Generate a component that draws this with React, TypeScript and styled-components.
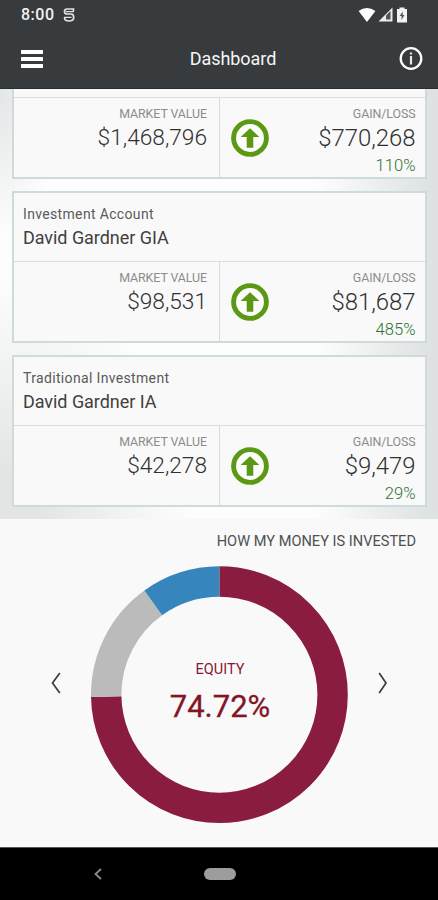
import React from "react";
import styled, { createGlobalStyle } from "styled-components";

const GlobalStyle = createGlobalStyle`
  * { box-sizing: border-box; }
  body { margin: 0; background: #000; font-family: Roboto, "Open Sans", sans-serif; }
`;

const Screen = styled.div`
  width: 438px;
  height: 900px;
  display: flex;
  flex-direction: column;
  overflow: hidden;
  background: #f9f9f9;
`;

const Header = styled.header`
  flex: none;
  height: 89px;
  background: #373b3d;
  border-bottom: 1px solid #2b2e30;
  color: #fff;
`;

const StatusBar = styled.div`
  height: 29px;
  padding: 0 29px 0 21px;
  display: flex;
  align-items: center;
  justify-content: space-between;
`;

const StatusGroup = styled.div<{ $gap: number }>`
  display: flex;
  align-items: center;
  gap: ${(p) => p.$gap}px;
`;

const Clock = styled.span`
  font-size: 16px;
  font-weight: 500;
  line-height: 28px;
  letter-spacing: 0.5px;
  color: #f2f2f2;
`;

const AppBar = styled.div`
  height: 59px;
  padding: 0 15px 0 20px;
  display: grid;
  grid-template-columns: 24px 1fr 24px;
  align-items: center;
  column-gap: 5px;
`;

const IconButton = styled.button`
  border: 0;
  padding: 0;
  background: none;
  display: flex;
  align-items: center;
  justify-content: center;
`;

const Title = styled.h1`
  margin: 1px 0 0 23px;
  text-align: center;
  font-size: 18px;
  font-weight: 400;
  line-height: 24px;
  letter-spacing: -0.05px;
  color: #f5f5f5;
`;

const Accounts = styled.main`
  flex: none;
  height: 430px;
  overflow: hidden;
  padding: 0 11px 12px 12px;
  display: flex;
  flex-direction: column;
  justify-content: flex-end;
  gap: 12px;
  background:
    linear-gradient(to right, rgba(255, 255, 255, 0) 72%, #dfe2e2 98%),
    radial-gradient(ellipse 190px 240px at 0 100%, #e3e5e5 20%, rgba(255, 255, 255, 0) 100%),
    radial-gradient(ellipse 60px 150px at 0 0, #e3e6e6, rgba(255, 255, 255, 0) 100%),
    #fdfdfd;
`;

const Card = styled.section`
  flex: none;
  height: 152px;
  border: 2px solid #cddbdf;
  background: #f9f9f9;
  display: flex;
  flex-direction: column;
`;

const CardHead = styled.div`
  height: 68px;
  padding: 11px 9px 0;
`;

const AccountType = styled.div`
  font-size: 14px;
  line-height: 20px;
  letter-spacing: 0.34px;
  color: #5a5a5a;
`;

const AccountName = styled.div`
  margin-top: 2px;
  font-size: 18px;
  line-height: 24px;
  letter-spacing: -0.05px;
  color: #3f3f3f;
`;

const Figures = styled.div`
  flex: 1;
  border-top: 1px solid #d9dddf;
  display: grid;
  grid-template-columns: 206px 1fr;
`;

const MarketCell = styled.div`
  border-right: 1px solid #d5dadc;
  padding: 8px 12px 0 0;
  text-align: right;
`;

const GainCell = styled.div`
  padding: 8px 9.5px 0 11px;
  display: flex;
  justify-content: space-between;
  text-align: right;
`;

const GainIcon = styled.svg`
  display: block;
  margin-top: 13px;
`;

const Label = styled.div`
  font-size: 12.4px;
  line-height: 16px;
  letter-spacing: -0.08px;
  color: #8c8c8c;
`;

const Amount = styled.div<{ $size: number }>`
  margin-top: 1px;
  font-size: ${(p) => p.$size}px;
  font-weight: 300;
  line-height: 30px;
  color: #303030;
`;

const Percent = styled.div`
  margin-top: 3px;
  font-size: 16.6px;
  font-weight: 300;
  line-height: 20px;
  color: #2f7333;
`;

const Invested = styled.section`
  flex: 1;
  min-height: 0;
  display: flex;
  flex-direction: column;
`;

const SectionTitle = styled.h2`
  margin: 13px 22px 0 0;
  text-align: right;
  font-size: 14.6px;
  font-weight: 400;
  line-height: 18px;
  color: #505050;
`;

const Carousel = styled.div`
  margin-top: 16px;
  padding: 0 48px;
  display: flex;
  justify-content: space-between;
`;

const Arrow = styled(IconButton)`
  width: 16px;
  height: 234px;
`;

const Donut = styled.div`
  display: grid;
  width: 258px;
  height: 258px;
  place-items: center;
  > * { grid-area: 1 / 1; }
`;

const DonutLabel = styled.div`
  margin: -3px 0 0 2px;
  text-align: center;
`;

const DonutName = styled.div`
  font-size: 14.5px;
  line-height: 18px;
  color: #861a35;
`;

const DonutValue = styled.div`
  margin-top: 9px;
  font-size: 31px;
  line-height: 38px;
  -webkit-text-stroke: 0.3px #841527;
  color: #841527;
`;

const NavBar = styled.nav`
  flex: none;
  height: 53px;
  background: #000;
  border-top: 1px solid #555;
  display: grid;
  grid-template-columns: 195px 49px 194px;
  align-items: center;
  justify-items: center;
`;

const HomePill = styled.div`
  width: 32px;
  height: 12px;
  border-radius: 6px;
  background: #9d9d9d;
`;

type Account = { type?: string; name?: string; market: string; gain: string; pct: string };

const accounts: Account[] = [
  { market: "$1,468,796", gain: "$770,268", pct: "110%" },
  { type: "Investment Account", name: "David Gardner GIA", market: "$98,531", gain: "$81,687", pct: "485%" },
  { type: "Traditional Investment", name: "David Gardner IA", market: "$42,278", gain: "$9,479", pct: "29%" },
];

const slices = [
  { color: "#8a1c40", share: 74.72 },
  { color: "#bbbbbb", share: 15.34 },
  { color: "#3785bd", share: 9.94 },
];

function DonutChart() {
  let start = 0;
  return (
    <svg width="258" height="258" viewBox="0 0 258 258">
      {slices.map((s) => {
        const offset = -start;
        start += s.share;
        return (
          <circle
            key={s.color}
            cx="129.4"
            cy="128.7"
            r="113.2"
            fill="none"
            stroke={s.color}
            strokeWidth="30.4"
            pathLength="100"
            strokeDasharray={`${s.share} ${100 - s.share}`}
            strokeDashoffset={offset}
            transform="rotate(-90 129.4 128.7)"
          />
        );
      })}
    </svg>
  );
}

export default function App() {
  return (
    <Screen>
      <GlobalStyle />
      <Header>
        <StatusBar>
          <StatusGroup $gap={8}>
            <Clock>8:00</Clock>
            <svg width="12" height="16" viewBox="0 0 12 16" fill="none" stroke="#e2e2e2" strokeWidth="1.7">
              <path d="M10.5 4V2H4Q1.5 2 1.5 4.5Q1.5 7 4 7H8Q10.7 7 10.7 10.5Q10.7 14 6 14Q1.5 14 1.5 10.5" />
              <path d="M3 4.6H11M1 10.3H8.5" strokeWidth="1.2" />
            </svg>
          </StatusGroup>
          <StatusGroup $gap={1.5}>
            <svg width="18" height="16" viewBox="0 0 18 16">
              <path d="M.6 4Q9-2 17.4 4L9 15Z" fill="#fff" />
            </svg>
            <svg width="15" height="15" viewBox="0 0 15 15">
              <path d="M14.5.5V14.5H.5Z" fill="#ececec" />
              <path d="M12.5 4V12.5H8V8.5Z" fill="#505456" />
            </svg>
            <svg width="15" height="16" viewBox="0 0 15 16">
              <path d="M5.5.5H10.5V2H13V15.5H3V2H5.5Z" fill="#f2f2f2" />
              <path d="M8.7 4.5L5.6 9H7.5V13L10.5 8H8.7Z" fill="#54585a" />
            </svg>
          </StatusGroup>
        </StatusBar>
        <AppBar>
          <IconButton aria-label="Menu">
            <svg width="24" height="20" viewBox="0 0 24 20" fill="#fff">
              <rect x="1" y="1" width="22" height="4" rx=".5" />
              <rect x="1" y="8" width="22" height="4" rx=".5" />
              <rect x="1" y="15" width="22" height="4" rx=".5" />
            </svg>
          </IconButton>
          <Title>Dashboard</Title>
          <IconButton aria-label="Information">
            <svg width="24" height="24" viewBox="0 0 24 24">
              <circle cx="12" cy="11.5" r="10.3" fill="none" stroke="#fff" strokeWidth="2.3" />
              <path d="M10.9 5.5h2.2v2h-2.2zM10.9 9h2.2V17.5h-2.2z" fill="#e8e8e8" />
            </svg>
          </IconButton>
        </AppBar>
      </Header>

      <Accounts>
        {accounts.map((a) => (
          <Card key={a.market}>
            <CardHead>
              {a.type && <AccountType>{a.type}</AccountType>}
              {a.name && <AccountName>{a.name}</AccountName>}
            </CardHead>
            <Figures>
              <MarketCell>
                <Label>MARKET VALUE</Label>
                <Amount $size={22.7}>{a.market}</Amount>
              </MarketCell>
              <GainCell>
                <GainIcon width="38" height="38" viewBox="0 0 38 38">
                  <circle cx="19" cy="19" r="16.4" fill="#fcfcfc" stroke="#5b9814" strokeWidth="4.9" />
                  <path d="M19 9.2L28.4 18H22.3V28.8H15.7V18H9.6Z" fill="#5b9814" />
                </GainIcon>
                <div>
                  <Label>GAIN/LOSS</Label>
                  <Amount $size={23.9}>{a.gain}</Amount>
                  <Percent>{a.pct}</Percent>
                </div>
              </GainCell>
            </Figures>
          </Card>
        ))}
      </Accounts>

      <Invested>
        <SectionTitle>HOW MY MONEY IS INVESTED</SectionTitle>
        <Carousel>
          <Arrow aria-label="Previous">
            <svg width="16" height="24" viewBox="0 0 16 24" fill="none" stroke="#3c3c3c" strokeWidth="1.7">
              <path d="M11.8 2L4.5 12L11.8 22" />
            </svg>
          </Arrow>
          <Donut>
            <DonutChart />
            <DonutLabel>
              <DonutName>EQUITY</DonutName>
              <DonutValue>74.72%</DonutValue>
            </DonutLabel>
          </Donut>
          <Arrow aria-label="Next">
            <svg width="16" height="24" viewBox="0 0 16 24" fill="none" stroke="#3c3c3c" strokeWidth="1.7">
              <path d="M5.2 2L12 12L5.2 22" />
            </svg>
          </Arrow>
        </Carousel>
      </Invested>

      <NavBar>
        <svg width="10" height="14" viewBox="0 0 10 14" fill="none" stroke="#8c8c8c" strokeWidth="1.8">
          <path d="M8 2L2.5 7L8 12" />
        </svg>
        <HomePill />
      </NavBar>
    </Screen>
  );
}
